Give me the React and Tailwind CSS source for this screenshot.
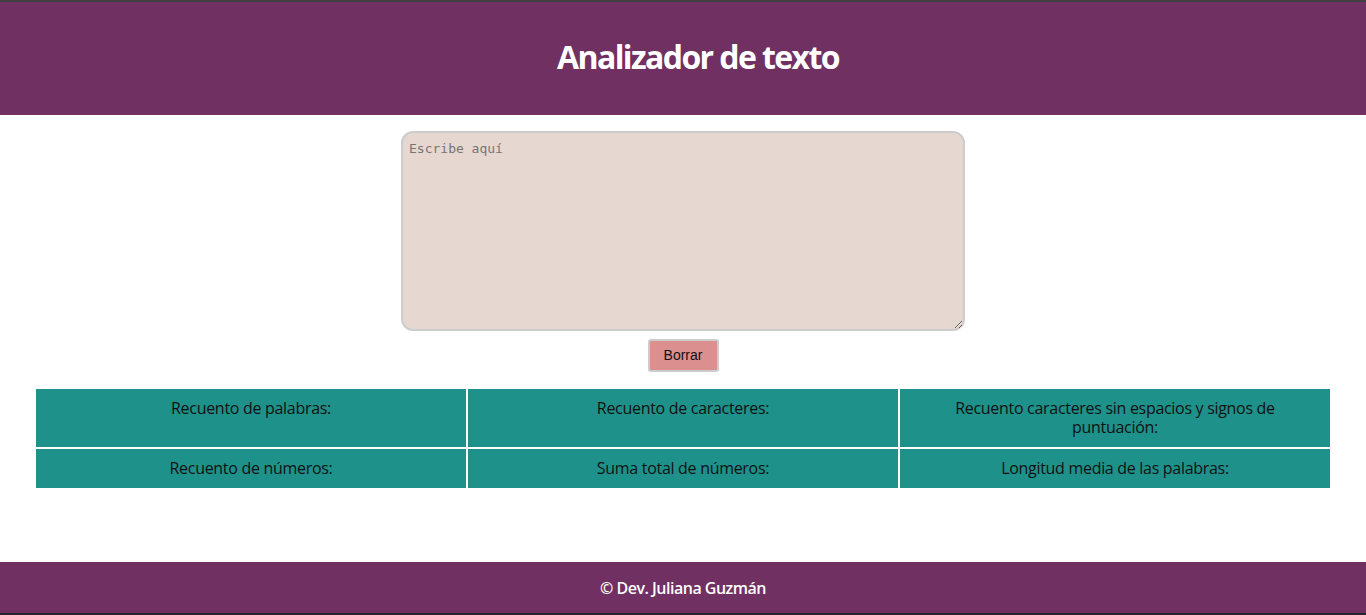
export default function App() {
  const font = { fontFamily: '"Fira Sans", "Open Sans", sans-serif' };
  const cell = "bg-[#1e918a] px-[10px] pt-[10px] pb-[10px] text-center tracking-[-0.3px]";
  return (
    <div className="min-h-[615px] flex flex-col bg-white" style={font}>
      <div className="h-[2px] bg-[#3f3f3f]" />
      <header className="h-[113px] bg-[#703062] flex items-center justify-center">
        <h1 className="text-white text-[32px] font-bold font-['Open_Sans',sans-serif] tracking-[-1.6px] leading-none mb-[4px] ml-[30px]">Analizador de texto</h1>
      </header>
      <main className="flex-1 flex flex-col items-center pt-[16px]">
        <textarea
          placeholder="Escribe aquí"
          className="w-[564px] h-[200px] rounded-[12px] border-2 border-[#cccccc] bg-[#e6d8d1] p-[6px] text-[13px] font-['DejaVu_Sans_Mono',monospace] placeholder:text-[#757575] outline-none"
        />
        <button className="mt-[8px] w-[71px] h-[33px] rounded-[3px] border-2 border-[#cccccc] bg-[#db8f8f] text-[14px] text-[#111] font-['Liberation_Sans',Arial,sans-serif]">
          Borrar
        </button>
        <div className="self-stretch mx-[36px] mt-[17px] grid grid-cols-3 gap-[2px] text-[16px] leading-[19px] text-[#111] font-['Open_Sans',sans-serif]">
          <div className={cell}>Recuento de palabras:</div>
          <div className={cell}>Recuento de caracteres:</div>
          <div className="bg-[#1e918a] px-[40px] pt-[10px] pb-[10px] text-center tracking-[-0.3px]">Recuento caracteres sin espacios y signos de puntuación:</div>
          <div className={cell}>Recuento de números:</div>
          <div className={cell}>Suma total de números:</div>
          <div className={cell}>Longitud media de las palabras:</div>
        </div>
      </main>
      <footer className="h-[51px] bg-[#703062] flex items-center justify-center">
        <span className="text-white text-[16px] font-semibold font-['Open_Sans',sans-serif] tracking-[-0.5px]">© Dev. Juliana Guzmán</span>
      </footer>
      <div className="h-[2px] bg-[#23272a]" />
    </div>
  );
}
